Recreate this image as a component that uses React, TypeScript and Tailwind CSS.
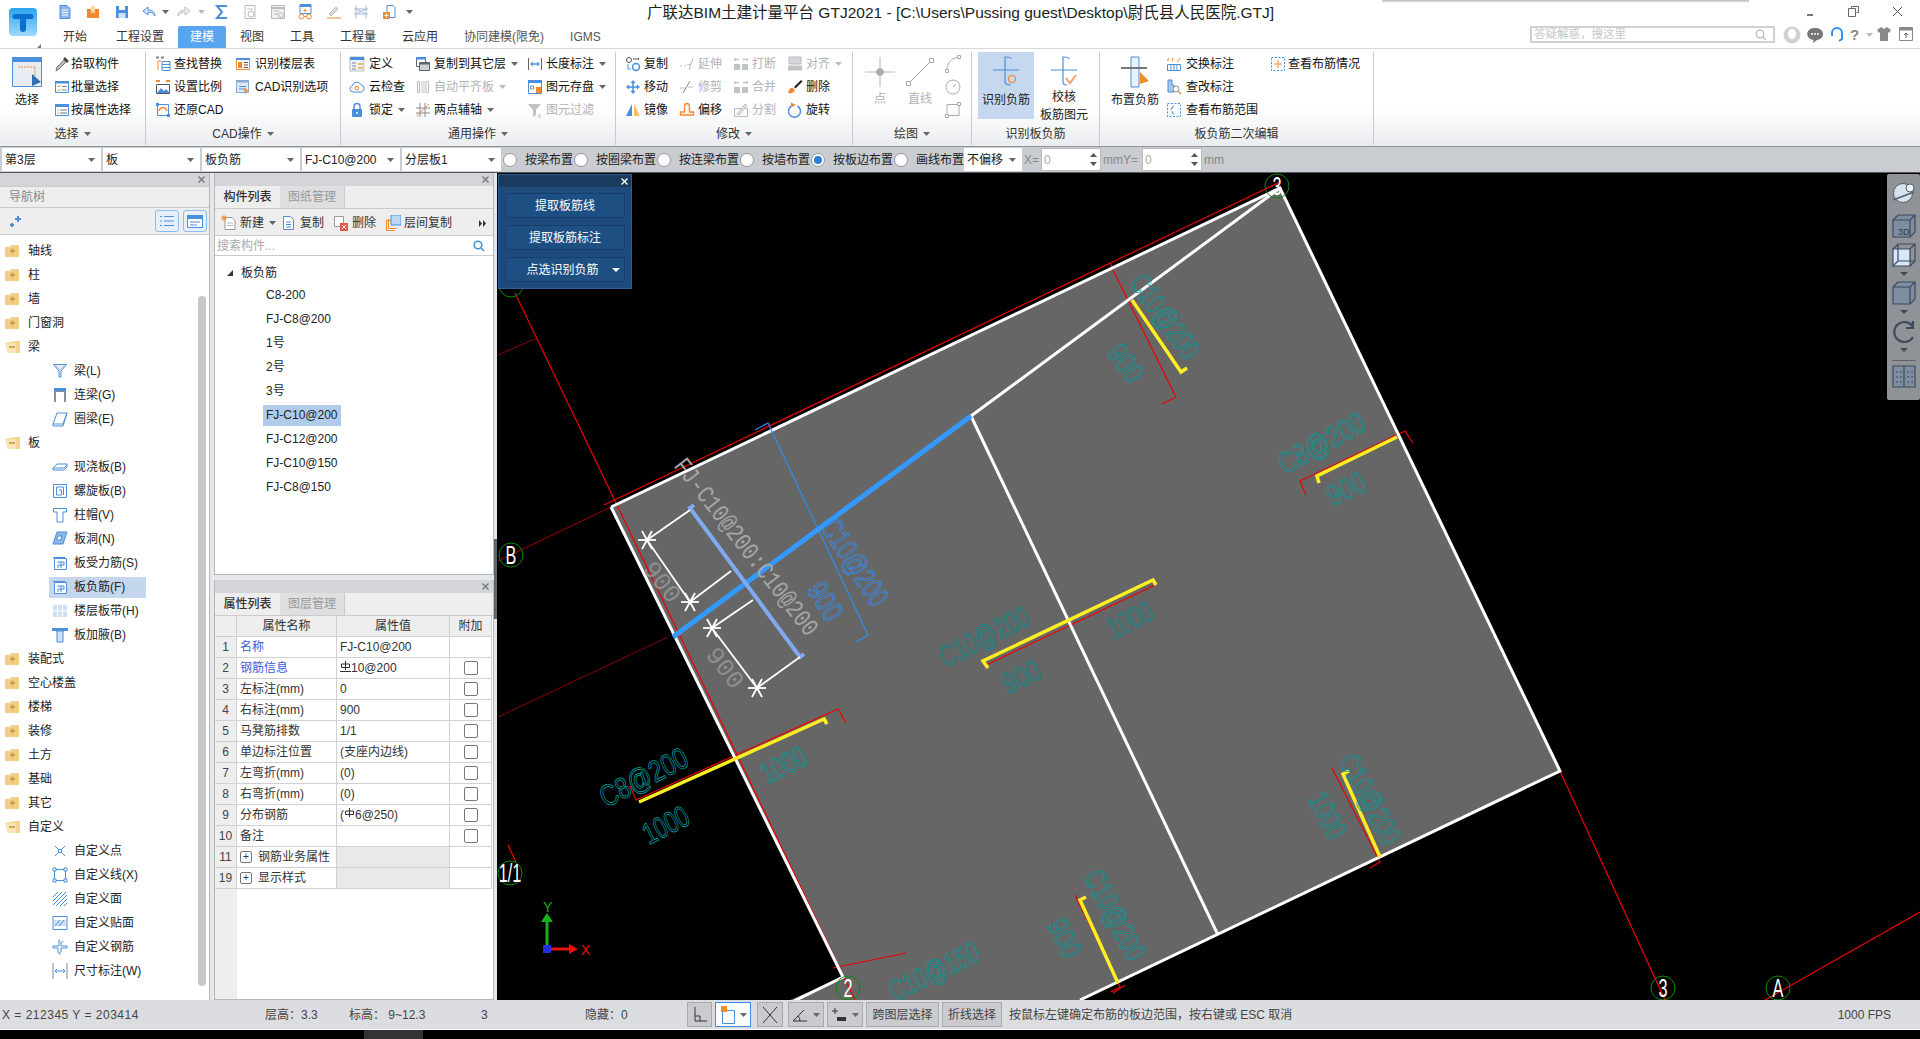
import type { ReactNode } from 'react';

const B = '#4a8fdc';
const O = '#f08a2c';
const D = '#5d6670';
const L = '#b8bcc0';

const icons: Record<string, ReactNode> = {
    doc: <><path d="M3 1.500h7l3 3v10H3z" fill="#8fb4e6" stroke={B} /><path d="M5 6h6M5 8.500h6M5 11h6" stroke="#fff" /></>,
    open: <><path d="M2 5h12v9H2z" fill={O} /><path d="M6 2h4v5H6z" fill="#ffd9a0" /><path d="M6 8h4" stroke="#fff" /></>,
    save: <><path d="M2 2h12v12H2z" fill={B} /><path d="M5 2h6v4H5z" fill="#fff" /><path d="M4.500 9h7v5h-7z" fill="#cfe0f5" /></>,
    undo: <path d="M14 12c0-4-3-6-7-6V3L2 7l5 4V8c3 0 5 1 7 4z" fill="#d7e6f8" stroke={B} />,
    redo: <path d="M2 12c0-4 3-6 7-6V3l5 4-5 4V8c-3 0-5 1-7 4z" fill="#eee" stroke={L} />,
    sigma: <path d="M13 2H3l5 6-5 6h10" stroke={B} strokeWidth="2" />,
    g1: <><path d="M3 1.500h10v13H3z" stroke={L} /><circle cx="9" cy="10" r="3" stroke={L} /><path d="M5 5h6" stroke={L} /></>,
    g2: <><path d="M1.500 1.500h13v13h-13z" stroke={L} fill="#f0f0f0" /><path d="M1.500 4h13" stroke={L} strokeWidth="2" /><path d="M4 7h5M4 10h4" stroke={L} /><circle cx="11" cy="11" r="2.500" stroke={L} /></>,
    glasses: <><path d="M3 .5h11v9H3z" fill="#fff" stroke={B} /><path d="M3 1h11v2H3z" fill={B} /><path d="M8 5v3M6.500 6.500h3" stroke={O} /><circle cx="4.500" cy="12.500" r="2.500" stroke={O} /><circle cx="12" cy="12.500" r="2.500" stroke={O} /><path d="M7 12.500h2.500" stroke={O} /></>,
    pen: <><path d="M3 10l7-7 2 2-7 7z" fill="#ddd" stroke={L} /><path d="M1 14h14" stroke={O} /></>,
    tower: <><path d="M3 1.500v13M13 1.500v13M1 5h14M1 10h14" stroke="#a5bbd6" /><path d="M3 5l10 5M13 5L3 10" stroke="#a5bbd6" /></>,
    docadd: <><path d="M6 1.500h6l2 2v10H6z" fill="#fff" stroke={B} /><path d="M2 8h7v7H2z" fill={O} /><path d="M5.500 9.500v4M3.500 11.500h4" stroke="#fff" /></>,
    pick: <><path d="M2 15l1-4 7-7 2 2-7 7z" fill="#b9bec4" stroke="#777" /><path d="M10 2l4 4" stroke="#444" strokeWidth="2.500" /></>,
    batch: <><path d="M1.500 2.500h13v11h-13z" fill="#fff" stroke={B} /><path d="M1 2h14v2.500H1z" fill={B} /><path d="M3.500 7l1 1 2-2M3.500 11l1 1 2-2" stroke={O} /><path d="M8 7.500h5M8 11h5" stroke="#888" /></>,
    attrs: <><path d="M1.500 2.500h13v11h-13z" fill="#fff" stroke={B} /><path d="M1 2h14v3H1z" fill={B} /><path d="M3.500 8h1M3.500 11h1M6 8h7M6 11h7" stroke="#777" /></>,
    replace: <><path d="M1 1.500h3M6 1.500h3" stroke="#888" strokeWidth="2" /><path d="M7 5.500h8v9H7z" fill="#fff" stroke={B} /><path d="M7 8.500h8M7 11.500h8" stroke={B} /><path d="M3 14V5h3" stroke={O} /></>,
    scale: <><path d="M1.500 5.500h13v9h-13z" fill="#fff" stroke="#555" /><path d="M2 14l4-5 3 3 2-2 4 4z" fill={B} /><path d="M1 2h4M11 2h4" stroke={O} strokeWidth="2" /></>,
    restore: <><path d="M2.500 2.500h11v11h-11z" stroke={B} /><path d="M4 9a4 4 0 0 1 7-2l1 2" stroke={O} strokeWidth="1.500" /><path d="M1 1h3v3H1zM12 12h3v3h-3z" fill={B} /></>,
    floors: <><path d="M1.500 2.500h13v11h-13z" fill="#fff" stroke={O} /><path d="M1 2h14v2H1z" fill={B} /><path d="M3 6h4v6H3z" fill={O} /><path d="M9 6.500h4M9 9h4M9 11.500h4" stroke="#555" /></>,
    cad: <><path d="M1.500 1.500h12v12h-12z" fill="#dfe9f5" stroke="#8aa9cf" /><path d="M1 1h13v2.500H1z" fill="#8aa9cf" /><path d="M4 7.500h7M4 10h7" stroke={B} /><path d="M9 9l5 3-3 1-1 3z" fill={O} /></>,
    define: <><path d="M1 1h14v14H1z" fill="#eef1f4" stroke="#bbb" /><path d="M1 1h14v3H1z" fill={B} /><path d="M3 7h4M3 10h4M3 13h4" stroke="#888" /><path d="M9 7h5v2H9zM9 11h5v2H9z" fill="#f5b46a" /></>,
    cloud: <><path d="M4 13a3.200 3.200 0 0 1-.6-6.300A4.600 4.600 0 0 1 12 5.800a3.700 3.700 0 0 1 .5 7.200z" fill="#fff" stroke={B} /><circle cx="8" cy="9" r="1.800" stroke={O} /></>,
    lock: <><path d="M5 7V4.500a3 3 0 0 1 6 0V7" stroke={B} strokeWidth="1.500" /><rect x="3" y="7" width="10" height="8" rx="1" fill={B} /><circle cx="8" cy="11" r="1" fill="#fff" /></>,
    copyfloor: <><path d="M1.500 1.500h9v9h-9z" fill="#fff" stroke={D} /><path d="M1 1h10v2.500H1z" fill={B} /><path d="M4.500 6.500h10v8h-10z" fill="#cdd2d6" stroke={D} /><path d="M4.500 6h10v2.500h-10z" fill={D} /></>,
    autoalign: <><path d="M2.500 2.500h2v11h-2zM11 2.500h2.500v11H11z" stroke={L} /><path d="M6 2h4v12H6z" fill="#dfe1e3" /></>,
    twoaxis: <><path d="M5 1v14M10 1v14M1 6h14M1 11h14" stroke="#8a8a8a" /><path d="M2 14L14 2" stroke={O} strokeDasharray="2 1" /></>,
    length: <><path d="M1.500 2v12M14.500 2v12" stroke="#666" /><path d="M4 8h8" stroke={B} strokeWidth="1.500" /><path d="M6 6L3.500 8 6 10M10 6l2.500 2L10 10" stroke={B} /></>,
    store: <><path d="M1.500 1.500h13v13h-13z" fill="#fff" stroke={B} /><path d="M1 1h14v3H1z" fill={B} /><path d="M3.500 7h3v3h-3z" stroke="#888" /><path d="M9 8h5v6H9z" fill={O} /></>,
    filter: <><path d="M1 2h13L9 8v5l-3 2V8z" fill="#bfc3c6" /><path d="M11 13h3M11 15h3" stroke="#bfc3c6" /></>,
    chain: <><circle cx="4" cy="4" r="2.500" stroke="#555" /><circle cx="11" cy="11" r="3.500" stroke={B} strokeWidth="1.500" /><path d="M8 3h6M13 2l1 1-1 1" stroke="#555" /><path d="M3 8v5h3" stroke={B} /></>,
    move: <><path d="M8 1l2.500 3h-5zM8 15l-2.500-3h5zM1 8l3-2.500v5zM15 8l-3 2.500v-5z" fill={B} /><path d="M8 4v8M4 8h8" stroke={B} strokeWidth="1.500" /></>,
    mirror: <><path d="M7 2v12H1z" fill={B} /><path d="M9 2v12h6z" fill="#f7c255" /></>,
    extend: <><path d="M1 10h2M5 10h2" stroke={L} /><path d="M8 9l4-1M10 14l4-12" stroke={L} /></>,
    trim: <><path d="M1 9h5M9 8h5" stroke={L} /><path d="M4 14L11 2" stroke="#888" /></>,
    offset: <path d="M1.500 13v-3h4V4a2.500 2.500 0 0 1 5 0v6h4v3z" fill="#fff6e5" stroke={O} strokeWidth="1.300" />,
    breakg: <><path d="M1 8h6v6H1zM9 8h6v6H9z" fill="#bfc3c6" /><path d="M2 2v3M5 2v3M11 2v3M14 2v3M1 3.500h3M12 3.500h3" stroke={L} /></>,
    split: <><path d="M1.500 6.500h13v8h-13z" stroke={L} /><path d="M4 12L12 2l2 1.500L6 13z" fill="#e5e5e5" stroke={L} /></>,
    alignr: <><path d="M2 1h12v7H2z" fill="#d5d7d9" stroke={L} /><path d="M1 9.500h14v5H1z" fill="#bfc3c6" /></>,
    erase: <><path d="M1 14c1-4 3-6 5-5l2 2c-1 2-3 4-7 3z" fill={O} /><path d="M7 8l7-7 1.500 1.500-7 7z" fill="#222" /></>,
    rotate: <><path d="M4.500 4a6 6 0 1 0 6 0" stroke={B} strokeWidth="1.500" /><path d="M4 .5L9 3 4 5.500z" fill={O} /></>,
    exchange: <><path d="M1.500 8.500h13v6h-13zM5 8.500v6M8 8.500v6M11 8.500v6" stroke={B} /><path d="M1.500 5l1-3M6 5l1-3M11 6l3-4" stroke={O} /></>,
    change: <><path d="M2 1h4v5h2v7H2z" fill="#a7c5ea" stroke={B} /><circle cx="10" cy="10" r="3" fill="#fff" stroke="#8a9099" /><path d="M12.500 12.500l2.500 2.500" stroke={O} strokeWidth="1.500" /></>,
    range: <><path d="M1.500 1.500h13v13h-13z" stroke={B} strokeDasharray="2 1.500" /><path d="M8 4a2 2 0 0 0-2 2v1H4.500M8 12a2 2 0 0 1-2-2V9" stroke={B} /></>,
    viewrange: <><path d="M1.500 1.500h13v13h-13z" stroke={B} strokeDasharray="2 1.500" /><path d="M8 4v8M4 8h8" stroke={O} /></>,
    newitem: <><path d="M4 2.500h7l3 3v9H4z" fill="#fff" stroke="#999" /><path d="M6 8h6M6 10.500h6" stroke="#bbb" /><path d="M3 0v6M0 3h6M1 1l4 4M5 1L1 5" stroke={O} /></>,
    cp: <><path d="M2.500 1.500h7l3 3v10h-10z" fill="#fff" stroke={B} /><path d="M5 7h5M5 9.500h5M5 12h5" stroke={B} /></>,
    del: <><path d="M1.500 1.500h9v10h-9z" fill="#fff" stroke="#999" /><path d="M7 8h8v8H7z" fill="#e4574c" /><path d="M9 10l4 4M13 10l-4 4" stroke="#fff" /></>,
    lay: <><path d="M1.500 5.500h8M1.500 5.500v10h8M3.500 3.500v10h8" stroke={O} /><path d="M6 0h10v10H6z" fill="#bcd8f6" stroke={B} /></>,
};

function Ico({ n, s = 16 }: { n: string; s?: number }) {
    return (
        <svg width={s} height={s} viewBox="0 0 16 16" fill="none" className="shrink-0">
            {icons[n]}
        </svg>
    );
}

function Caret({ c = '#666' }: { c?: string }) {
    return (
        <svg width="7" height="4" viewBox="0 0 7 4" className="ml-[5px] shrink-0">
            <path d="M0 0h7L3.500 4z" fill={c} />
        </svg>
    );
}

type Tool = { i: string; t: string; off?: boolean; caret?: boolean };

function ToolCol({ w, items, gap }: { w: string; items: Tool[]; gap: string }) {
    return (
        <div className={`${w} flex flex-col`}>
            {items.map((it) => (
                <div key={it.t} className="flex h-[23px] items-center">
                    <span className={gap}>
                        <Ico n={it.i} />
                    </span>
                    <span className={it.off ? 'whitespace-nowrap text-[#b0b3b6]' : 'whitespace-nowrap text-[#111]'}>{it.t}</span>
                    {it.caret && <Caret c={it.off ? '#bbb' : '#666'} />}
                </div>
            ))}
        </div>
    );
}

function Group({ w, label, caret = true, children }: { w: string; label: string; caret?: boolean; children: ReactNode }) {
    return (
        <div className={`${w} flex h-[93px] shrink-0 flex-col border-r border-[#c9cccf]`}>
            <div className="flex h-[71px] items-start">{children}</div>
            <div className="flex h-[22px] items-center justify-center text-[#333]">
                {label}
                {caret && <Caret />}
            </div>
        </div>
    );
}

function Big({ label, sub, w, active, children }: { label: string; sub?: string; w: string; active?: boolean; children: ReactNode }) {
    return (
        <div className={`${w} ${active ? 'bg-[#c5d8ef]' : ''} flex h-[67px] shrink-0 flex-col items-center pt-[4px]`}>
            <div className="h-[33px]">{children}</div>
            <div className="mt-[2px] whitespace-nowrap leading-[18px] text-[#222]">{label}</div>
            {sub && <div className="whitespace-nowrap leading-[18px] text-[#222]">{sub}</div>}
        </div>
    );
}

function Header() {
    const slots: [string, string][] = [
        ['doc', 'w-[28px]'], ['open', 'w-[29px]'], ['save', 'w-[27px]'], ['undo', 'w-[16px]'], ['car', 'w-[20px]'], ['redo', 'w-[17px]'], ['car2', 'w-[21px]'],
        ['sigma', 'w-[28px]'], ['g1', 'w-[28px]'], ['g2', 'w-[27px]'], ['glasses', 'w-[29px]'], ['pen', 'w-[28px]'], ['tower', 'w-[28px]'], ['docadd', 'w-[20px]'], ['car', 'w-[16px]'],
    ];
    return (
        <div className="relative flex h-[49px] shrink-0 border-b border-[#d6d8da] bg-white">
            <span className="absolute left-[1382px] top-0 h-[3px] w-[367px] bg-gradient-to-b from-[#b5b7b9] to-white" />
            <div className="relative h-[48px] w-[51px] shrink-0 pl-[9px] pt-[8px]">
                <svg width="28" height="28" viewBox="0 0 28 28">
                    <defs>
                        <linearGradient id="logo" x1="0" y1="0" x2="0" y2="1">
                            <stop offset="0" stopColor="#2aa3ee" />
                            <stop offset="1" stopColor="#9ed9fb" />
                        </linearGradient>
                    </defs>
                    <rect width="28" height="28" rx="4" fill="url(#logo)" />
                    <path d="M6 6h16a1.500 1.500 0 0 1 0 5h-5v10a3 3 0 0 1-6 0V11H6a2.500 2.500 0 0 1 0-5z" fill="#0b6fd0" />
                </svg>
                <span className="absolute left-[37px] top-[44px] h-0 w-0 border-b-[4px] border-l-[4px] border-b-[#777] border-l-transparent" />
            </div>
            <div className="flex min-w-0 flex-1 flex-col">
                <div className="flex h-[26px] items-start">
                    <div className="flex h-[24px] w-[366px] shrink-0 items-center pl-[6px]">
                        {slots.map(([n, w], i) => (
                            <span key={i} className={`${w} flex justify-start`}>
                                {n === 'car' ? <Caret /> : n === 'car2' ? <Caret c="#bbb" /> : <Ico n={n} />}
                            </span>
                        ))}
                    </div>
                    <div className="ml-[230px] mt-[3px] whitespace-nowrap text-[15.500px] leading-[20px] text-[#222]">
                        广联达BIM土建计量平台 GTJ2021 - [C:\Users\Pussing guest\Desktop\尉氏县人民医院.GTJ]
                    </div>
                    <div className="ml-auto flex h-[24px] items-center pr-[17px]">
                        <span className="mt-[6px] h-[2px] w-[6px] bg-[#777]" />
                        <svg width="11" height="11" viewBox="0 0 11 11" fill="none" stroke="#666" className="ml-[35px] mb-[1px]">
                            <path d="M3.500 2.500v-2h7v6h-2M.5 2.500h7v8h-7z" />
                        </svg>
                        <svg width="11" height="11" viewBox="0 0 11 11" stroke="#555" className="ml-[33px] mb-[1px]">
                            <path d="M1 1l9 9M10 1l-9 9" />
                        </svg>
                    </div>
                </div>
                <div className="flex h-[22px] items-stretch">
                    <Tab t="开始" c="ml-0" />
                    <Tab t="工程设置" c="ml-[5px]" />
                    <Tab t="建模" c="ml-[2px]" active />
                    <Tab t="视图" c="ml-[2px]" />
                    <Tab t="工具" c="ml-[2px]" />
                    <Tab t="工程量" c="ml-[2px]" />
                    <Tab t="云应用" c="ml-[2px]" />
                    <Tab t="协同建模(限免)" c="ml-[2px] text-[#555]" />
                    <Tab t="IGMS" c="ml-[2px] text-[#555]" />
                    <div className="ml-auto flex items-start pr-[7px]">
                        <div className="flex h-[17px] w-[245px] items-center justify-between border-2 border-[#cfd1d3] bg-white pl-[2px] pr-[6px] text-[11.500px] leading-none text-[#c8c8c8]">
                            答疑解惑，搜这里
                            <svg width="12" height="12" viewBox="0 0 12 12" fill="none" stroke="#bbb" strokeWidth="1.300">
                                <circle cx="5" cy="5" r="3.800" />
                                <path d="M8 8l3 3" />
                            </svg>
                        </div>
                        <svg width="18" height="18" viewBox="0 0 18 18" className="ml-[8px]">
                            <circle cx="9" cy="9" r="8.500" fill="#cfd1d3" />
                            <ellipse cx="9" cy="8" rx="4" ry="5" fill="#fff" />
                        </svg>
                        <svg width="16" height="16" viewBox="0 0 16 16" className="ml-[6px] mt-[1px]">
                            <path d="M8 1a7 6 0 0 1 2 12l-4 3 .5-3A7 6 0 0 1 8 1z" fill="#777" />
                            <circle cx="5" cy="7" r="1" fill="#fff" />
                            <circle cx="8" cy="7" r="1" fill="#fff" />
                            <circle cx="11" cy="7" r="1" fill="#fff" />
                        </svg>
                        <svg width="14" height="17" viewBox="0 0 14 17" fill="none" stroke="#2e8fef" strokeWidth="2" className="ml-[7px]">
                            <path d="M2 10V7a5 5 0 0 1 10 0v3M12 10v3l-3 2" />
                        </svg>
                        <span className="ml-[6px] w-[11px] text-[15px] font-bold leading-[17px] text-[#888]">?</span>
                        <span className="mt-[7px]"><Caret c="#bbb" /></span>
                        <svg width="14" height="14" viewBox="0 0 14 14" className="ml-[4px] mt-[1px]">
                            <path d="M4 0L0 3l2 3 1-1v9h8V5l1 1 2-3-4-3-3 2z" fill="#888" />
                        </svg>
                        <svg width="14" height="14" viewBox="0 0 14 14" fill="none" className="ml-[8px] mt-[1px]">
                            <path d="M.5.5h13v13H.5z" stroke="#888" />
                            <path d="M.5.5h13v3H.5z" fill="#888" />
                            <path d="M7 11V6M5 8l2-2 2 2" stroke="#666" />
                        </svg>
                    </div>
                </div>
            </div>
        </div>
    );
}

function Tab({ t, c, active }: { t: string; c: string; active?: boolean }) {
    return (
        <div className={`${c} flex items-center px-[12px] ${active ? 'rounded-t-[2px] bg-[#5aa5f0] text-white' : 'text-[#333]'}`}>{t}</div>
    );
}

function Ribbon() {
    return (
        <div className="flex h-[97px] shrink-0 items-start bg-gradient-to-b from-white from-60% to-[#eaedef] pt-[3px]">
            <Group w="w-[146px]" label="选择">
                <Big w="w-[54px]" label="选择">
                    <svg width="30" height="30" viewBox="0 0 30 30" fill="none" className="mt-[1px]">
                        <path d="M.5.5h29v29H.5z" fill="#e8edf4" stroke={B} />
                        <path d="M0 0h30v5H0z" fill={B} />
                        <path d="M6 10h17v16" stroke={O} strokeDasharray="2 1" />
                        <path d="M20 17l9 8-9 4z" fill="#2f6fb8" />
                    </svg>
                </Big>
                <ToolCol w="w-[92px]" gap="w-[17px]" items={[{ i: 'pick', t: '拾取构件' }, { i: 'batch', t: '批量选择' }, { i: 'attrs', t: '按属性选择' }]} />
            </Group>
            <Group w="w-[195px]" label="CAD操作">
                <div className="w-[9px]" />
                <ToolCol w="w-[80px]" gap="w-[19px]" items={[{ i: 'replace', t: '查找替换' }, { i: 'scale', t: '设置比例' }, { i: 'restore', t: '还原CAD' }]} />
                <ToolCol w="w-[100px]" gap="w-[20px]" items={[{ i: 'floors', t: '识别楼层表' }, { i: 'cad', t: 'CAD识别选项' }]} />
            </Group>
            <Group w="w-[275px]" label="通用操作">
                <div className="w-[8px]" />
                <ToolCol w="w-[66px]" gap="w-[20px]" items={[{ i: 'define', t: '定义' }, { i: 'cloud', t: '云检查' }, { i: 'lock', t: '锁定', caret: true }]} />
                <ToolCol w="w-[112px]" gap="w-[19px]" items={[{ i: 'copyfloor', t: '复制到其它层', caret: true }, { i: 'autoalign', t: '自动平齐板', off: true, caret: true }, { i: 'twoaxis', t: '两点辅轴', caret: true }]} />
                <ToolCol w="w-[88px]" gap="w-[19px]" items={[{ i: 'length', t: '长度标注', caret: true }, { i: 'store', t: '图元存盘', caret: true }, { i: 'filter', t: '图元过滤', off: true }]} />
            </Group>
            <Group w="w-[237px]" label="修改">
                <div className="w-[9px]" />
                <ToolCol w="w-[54px]" gap="w-[19px]" items={[{ i: 'chain', t: '复制' }, { i: 'move', t: '移动' }, { i: 'mirror', t: '镜像' }]} />
                <ToolCol w="w-[54px]" gap="w-[19px]" items={[{ i: 'extend', t: '延伸', off: true }, { i: 'trim', t: '修剪', off: true }, { i: 'offset', t: '偏移' }]} />
                <ToolCol w="w-[54px]" gap="w-[19px]" items={[{ i: 'breakg', t: '打断', off: true }, { i: 'breakg', t: '合并', off: true }, { i: 'split', t: '分割', off: true }]} />
                <ToolCol w="w-[60px]" gap="w-[19px]" items={[{ i: 'alignr', t: '对齐', off: true, caret: true }, { i: 'erase', t: '删除' }, { i: 'rotate', t: '旋转' }]} />
            </Group>
            <Group w="w-[119px]" label="绘图">
                <div className="w-[5px]" />
                <div className="flex w-[44px] flex-col items-center pt-[5px]">
                    <svg width="30" height="30" viewBox="0 0 30 30" fill="none" stroke="#b5b8bb">
                        <path d="M15 0v30M0 15h30" />
                        <circle cx="15" cy="15" r="3.500" fill="#aaa" />
                    </svg>
                    <span className="mt-[3px] leading-[18px] text-[#b0b3b6]">点</span>
                </div>
                <div className="flex w-[36px] flex-col items-center pt-[5px]">
                    <svg width="30" height="30" viewBox="0 0 30 30" fill="none" stroke="#a5a8ab">
                        <path d="M4 26L26 4" />
                        <path d="M1.500 24.500h4v4h-4zM24.500 1.500h4v4h-4z" fill="#fff" />
                    </svg>
                    <span className="mt-[3px] leading-[18px] text-[#b0b3b6]">直线</span>
                </div>
                <div className="ml-[7px] flex flex-col">
                    <span className="flex h-[23px] items-center">
                        <svg width="16" height="18" viewBox="0 0 16 18" fill="none" stroke="#aaa">
                            <path d="M2 15C2 8 6 3 14 2" />
                            <path d="M.5 14.500h3v3h-3zM12.500.5h3v3h-3z" fill="#fff" />
                        </svg>
                    </span>
                    <span className="flex h-[23px] items-center">
                        <svg width="16" height="16" viewBox="0 0 16 16" fill="none" stroke="#aaa">
                            <circle cx="8" cy="8" r="7" />
                            <path d="M8 8l3-3" />
                        </svg>
                    </span>
                    <span className="flex h-[23px] items-center">
                        <svg width="16" height="16" viewBox="0 0 16 16" fill="none" stroke="#aaa">
                            <path d="M2 2.500h12v11H2z" />
                            <path d="M.5 12.500h3v3h-3zM12.500.5h3v3h-3z" fill="#fff" />
                        </svg>
                    </span>
                </div>
            </Group>
            <Group w="w-[128px]" label="识别板负筋" caret={false}>
                <div className="w-[6px]" />
                <Big w="w-[56px]" label="识别负筋" active>
                    <svg width="26" height="30" viewBox="0 0 26 30" fill="none" stroke={B} strokeWidth="1.200">
                        <path d="M13 1h-1v25c0 2 2 3 6 3M0 14h26" />
                        <path d="M13 1c3 0 5 0 5 2" />
                        <circle cx="19" cy="23" r="3.500" stroke={O} />
                    </svg>
                </Big>
                <div className="w-[5px]" />
                <Big w="w-[50px]" label="校核" sub="板筋图元">
                    <svg width="26" height="30" viewBox="0 0 26 30" fill="none" stroke={B} strokeWidth="1.200">
                        <path d="M13 1h-1v25c0 2 2 3 4 3M0 14h26" />
                        <path d="M13 1c3 0 5 0 5 2" />
                        <path d="M15 22l4 5 6-8" stroke="#f4a070" strokeWidth="2" />
                    </svg>
                </Big>
            </Group>
            <Group w="w-[274px]" label="板负筋二次编辑" caret={false}>
                <div className="w-[7px]" />
                <Big w="w-[56px]" label="布置负筋">
                    <svg width="28" height="32" viewBox="0 0 28 32" fill="none">
                        <path d="M10 1h8v30h-8z" fill="#eaf1fa" stroke={B} />
                        <path d="M0 12h26" stroke="#777" strokeWidth="2" />
                        <path d="M19 16l9 9-9 3z" fill={O} />
                    </svg>
                </Big>
                <div className="w-[3px]" />
                <ToolCol w="w-[104px]" gap="w-[20px]" items={[{ i: 'exchange', t: '交换标注' }, { i: 'change', t: '查改标注' }, { i: 'range', t: '查看布筋范围' }]} />
                <ToolCol w="w-[100px]" gap="w-[18px]" items={[{ i: 'viewrange', t: '查看布筋情况' }]} />
            </Group>
        </div>
    );
}

function Select({ t, w }: { t: string; w: string }) {
    return (
        <div className={`${w} flex h-[23px] shrink-0 items-center justify-between bg-white pl-[3px] pr-[6px] text-[#222]`}>
            {t}
            <Caret />
        </div>
    );
}

function Radio({ t, w, on }: { t: string; w: string; on?: boolean }) {
    return (
        <div className={`${w} flex shrink-0 items-center`}>
            <span className="flex h-[14px] w-[14px] shrink-0 items-center justify-center rounded-full border border-[#999] bg-white">
                {on && <span className="h-[8px] w-[8px] rounded-full bg-[#2b7fe0]" />}
            </span>
            <span className="ml-[8px] whitespace-nowrap text-[#222]">{t}</span>
        </div>
    );
}

function Spin() {
    return (
        <div className="flex h-[23px] w-[60px] shrink-0 items-center justify-between border border-[#bbb] bg-white pl-[2px] pr-[3px] text-[#aaa]">
            0
            <svg width="7" height="17" viewBox="0 0 7 17" fill="#555">
                <path d="M3.500 2L7 6H0zM3.500 15L0 11h7z" />
            </svg>
        </div>
    );
}

function OptionBar() {
    return (
        <div className="flex h-[27px] shrink-0 items-center gap-[2px] border-b border-t border-b-[#55585c] border-t-[#8f9296] bg-[#c9ccd0] pl-[2px]">
            <Select t="第3层" w="w-[99px]" />
            <Select t="板" w="w-[97px]" />
            <Select t="板负筋" w="w-[98px]" />
            <Select t="FJ-C10@200" w="w-[98px]" />
            <Select t="分层板1" w="w-[99px]" />
            <Radio t="按梁布置" w="w-[69px]" />
            <Radio t="按圈梁布置" w="w-[81px]" />
            <Radio t="按连梁布置" w="w-[81px]" />
            <Radio t="按墙布置" w="w-[69px]" />
            <Radio t="按板边布置" w="w-[81px]" on />
            <Radio t="画线布置" w="w-[68px]" />
            <Select t="不偏移" w="w-[58px]" />
            <span className="w-[15px] text-[#888]">X=</span>
            <Spin />
            <span className="w-[37px] whitespace-nowrap text-[#888]">mmY=</span>
            <Spin />
            <span className="text-[#888]">mm</span>
        </div>
    );
}

const closed = (
    <svg width="15" height="12" viewBox="0 0 15 12">
        <path d="M0 2h5l1-2h8v12H0z" fill="#f0cf85" />
        <path d="M7.500 3.500v5M5 6h5" stroke="#c9973c" strokeWidth="1.500" />
    </svg>
);
const opened = (
    <svg width="16" height="12" viewBox="0 0 16 12">
        <path d="M0 2l10-2h5v12H3z" fill="#f2d48f" />
        <path d="M0 2h11v10H3z" fill="#f8e4b4" />
        <path d="M4 6h6" stroke="#c9973c" strokeWidth="1.500" />
    </svg>
);

function Sub({ k }: { k: string }) {
    const s: Record<string, ReactNode> = {
        beam: <><path d="M1.500 1.500h13L9 8v6H7V8z" stroke={B} fill="#e9f1fb" /><path d="M4 3l4 4 4-4" stroke={L} /></>,
        link: <><path d="M2 1h12v14h-2V5H4v10H2z" fill="#8a9099" /><path d="M2 1h12v3H2z" fill={B} /></>,
        ring: <><path d="M5 2h10l-4 11H1z" fill="#fff" stroke={B} /><path d="M1 13v2h10l4-13" stroke={B} /></>,
        cast: <><path d="M1 9l4-4h10v3l-3 3H1z" fill="#fff" stroke={B} /><path d="M1 9h11l3-3" stroke={B} /></>,
        spiral: <><path d="M1.500 1.500h13v13h-13z" stroke={B} /><path d="M11.500 12V4h-7v8h5V7H7" stroke={B} /></>,
        cap: <path d="M1.500 1.500h13V5H11v10H5V5H1.500z" stroke={B} fill="#fff" />,
        hole: <><path d="M5 1h10l-4 12H1z" fill="#8fb4e6" stroke={B} /><path d="M6 5h4l-1.500 4h-4z" fill="#fff" stroke={B} /></>,
        bar: <><path d="M2.500 3.500h12v11h-12z" fill="#fff" stroke={B} /><path d="M1 2.500h12" stroke={B} /><path d="M5 7h7v3H6v3M9 7v6" stroke={B} /></>,
        floorband: <><path d="M1 2h14v12H1z" fill="#cfe0f5" /><path d="M5.500 2v12M10.500 2v12M1 8h14" stroke="#fff" /></>,
        haunch: <><path d="M0 1h16v3H0z" fill={B} /><path d="M0 4h4l2 3V4zM16 4h-4l-2 3V4z" fill={O} /><path d="M5 4h6v11H5z" fill="#cfe0f5" stroke={B} /></>,
        pt: <><path d="M3 3l10 10M13 3L3 13" stroke={B} /><path d="M6.500 6.500h3v3h-3z" fill="#fff" stroke={B} /></>,
        ln: <><path d="M2.500 2.500h11v11h-11z" stroke={B} /><path d="M1 1h3v3H1zM12 1h3v3h-3zM1 12h3v3H1zM12 12h3v3h-3z" fill="#fff" stroke={B} /></>,
        face: <path d="M1 6l5-5M1 10l9-9M1 14L14 1M4 15L15 4M8 15l7-7M12 15l3-3" stroke={B} />,
        stick: <><path d="M1 1.500h14v13H1z" stroke={B} /><path d="M2 5h12v6H2z" fill="#cfe0f5" /><path d="M3 11l5-6M7 11l5-6" stroke={B} /></>,
        steel: <path d="M8 1H7v6H1v2h5v3c0 2 1 3 2 3 0-1 0-2 1-2V9h6V7H9V3c1 0 2 0 2-1" stroke={B} />,
        dim: <><path d="M1 0v16M15 0v16" stroke="#888" /><path d="M3 8h10M5 6L3 8l2 2M11 6l2 2-2 2" stroke={B} /></>,
    };
    return (
        <svg width="16" height="16" viewBox="0 0 16 16" fill="none" className="shrink-0">
            {s[k]}
        </svg>
    );
}

const tree: { t: string; k?: string; open?: boolean; sel?: boolean }[] = [
    { t: '轴线' }, { t: '柱' }, { t: '墙' }, { t: '门窗洞' }, { t: '梁', open: true },
    { t: '梁(L)', k: 'beam' }, { t: '连梁(G)', k: 'link' }, { t: '圈梁(E)', k: 'ring' }, { t: '板', open: true },
    { t: '现浇板(B)', k: 'cast' }, { t: '螺旋板(B)', k: 'spiral' }, { t: '柱帽(V)', k: 'cap' }, { t: '板洞(N)', k: 'hole' },
    { t: '板受力筋(S)', k: 'bar' }, { t: '板负筋(F)', k: 'bar', sel: true }, { t: '楼层板带(H)', k: 'floorband' }, { t: '板加腋(B)', k: 'haunch' },
    { t: '装配式' }, { t: '空心楼盖' }, { t: '楼梯' }, { t: '装修' }, { t: '土方' }, { t: '基础' }, { t: '其它' }, { t: '自定义', open: true },
    { t: '自定义点', k: 'pt' }, { t: '自定义线(X)', k: 'ln' }, { t: '自定义面', k: 'face' }, { t: '自定义贴面', k: 'stick' }, { t: '自定义钢筋', k: 'steel' }, { t: '尺寸标注(W)', k: 'dim' },
];

function Strip() {
    return (
        <div className="flex h-[13px] shrink-0 items-center justify-end bg-[#d3d5d9] pr-[4px]">
            <svg width="7" height="7" viewBox="0 0 7 7" stroke="#777" strokeWidth="1.400">
                <path d="M.5.5l6 6M6.500.5l-6 6" />
            </svg>
        </div>
    );
}

function NavPanel() {
    return (
        <div className="relative flex h-full w-[210px] shrink-0 flex-col border-r border-[#b5b8bb] bg-white">
            <Strip />
            <div className="flex h-[22px] shrink-0 items-center border-b border-t border-[#c9cbcd] bg-[#eeeeee] pl-[9px] text-[#888]">导航树</div>
            <div className="flex h-[27px] shrink-0 items-center justify-between border-b border-[#c9cbcd] bg-[#eeeeee] pl-[8px] pr-[2px]">
                <svg width="13" height="11" viewBox="0 0 13 11" fill={B}>
                    <path d="M4 7v4M2 9h4M10 0v6M7 3h6" stroke={B} strokeWidth="2" />
                </svg>
                <div className="flex gap-[4px]">
                    <span className="flex h-[22px] w-[24px] items-center justify-center rounded-[3px] border border-[#8dbcee] bg-[#e7f0fa]">
                        <svg width="14" height="12" viewBox="0 0 14 12" fill="none" stroke={B}>
                            <path d="M0 1.500h2M0 6h2M0 10.500h2M4 1.500h10M4 6h10M4 10.500h10" />
                        </svg>
                    </span>
                    <span className="flex h-[22px] w-[24px] items-center justify-center rounded-[3px] border border-[#8dbcee] bg-[#e7f0fa]">
                        <svg width="16" height="13" viewBox="0 0 16 13" fill="none">
                            <path d="M.5.5h15v12H.5z" stroke={B} fill="#fff" />
                            <path d="M0 0h16v4H0z" fill={B} />
                            <path d="M3 7h10M3 10h7" stroke={B} />
                        </svg>
                    </span>
                </div>
            </div>
            <div className="flex flex-col pt-[4px] text-[#222]">
                {tree.map((r) =>
                    r.k ? (
                        <div key={r.t} className="flex h-[24px] items-center pl-[49px]">
                            <span className={`flex h-[21px] w-[97px] items-center whitespace-nowrap pl-[3px] ${r.sel ? 'bg-[#c5d7ee]' : ''}`}>
                                <Sub k={r.k} />
                                <span className="ml-[6px]">{r.t}</span>
                            </span>
                        </div>
                    ) : (
                        <div key={r.t} className="flex h-[24px] items-center pl-[5px]">
                            <span className="flex w-[23px]">{r.open ? opened : closed}</span>
                            {r.t}
                        </div>
                    ),
                )}
            </div>
            <span className="absolute left-[198px] top-[123px] h-[690px] w-[8px] rounded-full bg-[#c8c8c8]" />
        </div>
    );
}

function TabRow({ a, b }: { a: string; b: string }) {
    return (
        <div className="flex h-[23px] shrink-0 border-b border-[#c9cbcd] bg-[#eeeeee]">
            <div className="flex w-[65px] items-center justify-center font-medium text-[#333]">{a}</div>
            <div className="flex w-[65px] items-center justify-center border-r border-[#c9cbcd] bg-[#dedfe0] text-[#999]">{b}</div>
        </div>
    );
}

function ComponentPanel() {
    const items = ['C8-200', 'FJ-C8@200', '1号', '2号', '3号', 'FJ-C10@200', 'FJ-C12@200', 'FJ-C10@150', 'FJ-C8@150'];
    return (
        <div className="flex h-[402px] shrink-0 flex-col border border-t-0 border-[#b5b8bb] bg-white">
            <Strip />
            <TabRow a="构件列表" b="图纸管理" />
            <div className="flex h-[27px] shrink-0 items-center border-b border-[#c9cbcd] bg-[#eeeeee] pl-[6px] pt-[2px] text-[#333]">
                <Ico n="newitem" />
                <span className="ml-[3px]">新建</span>
                <Caret />
                <span className="ml-[5px]"><Ico n="cp" /></span>
                <span className="ml-[3px]">复制</span>
                <span className="ml-[9px]"><Ico n="del" /></span>
                <span className="ml-[3px]">删除</span>
                <span className="ml-[9px]"><Ico n="lay" /></span>
                <span className="ml-[3px]">层间复制</span>
                <svg width="7" height="7" viewBox="0 0 7 7" fill="#333" className="ml-[27px]">
                    <path d="M0 0l3 3.500L0 7zM4 0l3 3.500L4 7z" />
                </svg>
            </div>
            <div className="flex h-[20px] shrink-0 items-center justify-between border-b border-[#c9cbcd] pl-[2px] pr-[8px] text-[#aaa]">
                搜索构件...
                <svg width="12" height="12" viewBox="0 0 12 12" fill="none" stroke="#3a95d6" strokeWidth="1.600">
                    <circle cx="5" cy="5" r="3.800" />
                    <path d="M8 8l3 3" />
                </svg>
            </div>
            <div className="flex h-[27px] shrink-0 items-center pl-[12px] pt-[6px] text-[#222]">
                <span className="h-0 w-0 border-b-[6px] border-l-[6px] border-b-[#333] border-l-transparent" />
                <span className="ml-[8px]">板负筋</span>
            </div>
            {items.map((t) => (
                <div key={t} className="flex h-[24px] shrink-0 items-center pl-[51px] text-[#222]">
                    <span className={t === 'FJ-C10@200' ? '-ml-[3px] flex h-[21px] w-[78px] items-center bg-[#b1cceb] pl-[3px]' : ''}>{t}</span>
                </div>
            ))}
        </div>
    );
}

const rows: [string, string, string, ReactNode, boolean][] = [
    ['1', '名称', 'blue', 'FJ-C10@200', false],
    ['2', '钢筋信息', 'blue', 'rebar', true],
    ['3', '左标注(mm)', '', '0', true],
    ['4', '右标注(mm)', '', '900', true],
    ['5', '马凳筋排数', '', '1/1', true],
    ['6', '单边标注位置', '', '(支座内边线)', true],
    ['7', '左弯折(mm)', '', '(0)', true],
    ['8', '右弯折(mm)', '', '(0)', true],
    ['9', '分布钢筋', '', 'dist', true],
    ['10', '备注', '', '', true],
];

function AttrPanel() {
    const cell = 'flex h-[21px] items-center border-b border-r border-[#cfd1d3]';
    return (
        <div className="flex min-h-0 flex-1 flex-col border border-t-0 border-[#b5b8bb] bg-white">
            <Strip />
            <TabRow a="属性列表" b="图层管理" />
            <div className="flex min-h-0 flex-1">
                <div className="flex w-[22px] shrink-0 flex-col bg-[#eeeeee] text-[#444]">
                    <div className={`${cell} shrink-0`} />
                    {[...rows.map((r) => r[0]), '11', '19'].map((n) => (
                        <div key={n} className={`${cell} shrink-0 justify-center`}>{n}</div>
                    ))}
                </div>
                <div className="flex w-[100px] shrink-0 flex-col text-[#333]">
                    <div className={`${cell} justify-center bg-[#eeeeee]`}>属性名称</div>
                    {rows.map((r) => (
                        <div key={r[0]} className={`${cell} pl-[3px] ${r[2] ? 'text-[#3b5bd6]' : ''}`}>{r[1]}</div>
                    ))}
                    {['钢筋业务属性', '显示样式'].map((t) => (
                        <div key={t} className={`${cell} pl-[3px]`}>
                            <span className="flex h-[12px] w-[12px] items-center justify-center rounded-[2px] border border-[#777] text-[10px] leading-none">+</span>
                            <span className="ml-[6px]">{t}</span>
                        </div>
                    ))}
                </div>
                <div className="flex w-[113px] shrink-0 flex-col text-[#333]">
                    <div className={`${cell} justify-center bg-[#eeeeee]`}>属性值</div>
                    {rows.map((r) => (
                        <div key={r[0]} className={`${cell} pl-[3px]`}>
                            {r[3] === 'rebar' ? (
                                <>
                                    <Rebar under />10@200
                                </>
                            ) : r[3] === 'dist' ? (
                                <>
                                    (<Rebar />6@250)
                                </>
                            ) : (
                                r[3]
                            )}
                        </div>
                    ))}
                    <div className={`${cell} bg-[#e9e9e9]`} />
                    <div className={`${cell} bg-[#e9e9e9]`} />
                </div>
                <div className="flex w-[42px] shrink-0 flex-col text-[#333]">
                    <div className={`${cell} justify-center bg-[#eeeeee]`}>附加</div>
                    {rows.map((r) => (
                        <div key={r[0]} className={`${cell} justify-center`}>
                            {r[4] && <span className="h-[14px] w-[14px] rounded-[2px] border border-[#777] bg-white" />}
                        </div>
                    ))}
                    <div className={cell} />
                    <div className={cell} />
                </div>
            </div>
        </div>
    );
}

function Rebar({ under }: { under?: boolean }) {
    return (
        <svg width="11" height="12" viewBox="0 0 11 12" fill="none" stroke="#333" className="mb-[2px]">
            <path d="M5.500 0v9M1.500 3h8v3.500h-8z" />
            {under && <path d="M0 10.500h11" />}
        </svg>
    );
}

function Lbl({ x, y, r, t, c = '#009a9a', sx = 0.8 }: { x: number; y: number; r: number; t: string; c?: string; sx?: number }) {
    return (
        <text
            transform={`translate(${x} ${y}) rotate(${r}) scale(${sx} 1)`}
            fontFamily="Liberation Sans"
            fontSize="30"
            fill="none"
            stroke={c}
            strokeWidth="0.8"
        >
            {t}
        </text>
    );
}

function Star({ x, y }: { x: number; y: number }) {
    return (
        <g stroke="#fff" strokeWidth="1.800">
            <path d={`M${x - 9} ${y}h18`} />
            <path d={`M${x - 5} ${y - 9}l10 18`} />
            <path d={`M${x + 5} ${y - 9}l-10 18`} />
        </g>
    );
}

function Axis({ x, y, t }: { x: number; y: number; t: string }) {
    return (
        <g>
            <circle cx={x} cy={y} r="12" fill="none" stroke="#0a8a0a" />
            <text transform={`translate(${x} ${y + 9}) scale(.65 1)`} textAnchor="middle" fontFamily="Liberation Sans" fontSize="25" fill="#fff">
                {t}
            </text>
        </g>
    );
}

function Drawing() {
    return (
        <svg width="1423" height="827" viewBox="497 173 1423 827" className="block" fill="none">
            <path d="M611 507L1280 188 1560 771 1080 1000H790L843 977z" fill="#666666" />
            <g stroke="#c00000" strokeWidth="1">
                <path d="M498 355L537 338" stroke="#8a0000" />
                <path d="M498 717L668 637" stroke="#8a0000" />
                <path d="M498 561L611 507" stroke="#a00000" />
            </g>
            <g stroke="#f00000" strokeWidth="1.200">
                <path d="M515 293L855 1000" />
                <path d="M604 505L1280 182" />
                <path d="M1560 771L1665 1000" />
                <path d="M1920 912L1765 1000" />
                <path d="M508 845L516 862" />
                <path d="M833 968L906 953" />
                <path d="M1110 262l3 8 63 127-14 7" />
                <path d="M1413 443l-8-12-105 50 6 14" />
                <path d="M630 786l6 14 202-91 8 14" />
                <path d="M1332 768l48 94-10 6" />
                <path d="M1075 895l45 92-9 5" />
                <path d="M1113 993l12-8" />
                <path d="M986 665L1155 585" />
            </g>
            <circle cx="511" cy="285" r="12" stroke="#0a8a0a" />
            <path d="M611 507L1280 188 1560 771 1080 1000M611 507L843 977 790 1003M971 416L1218 935M971 416L1280 188" stroke="#fff" strokeWidth="3" />
            <g stroke="#ffee22" strokeWidth="3.500">
                <path d="M1132 300l49 72 6-4" />
                <path d="M1397 437l-80 39 2 7" />
                <path d="M988 668l-5-7 170-81 3 5" />
                <path d="M827 724l-3-5-185 83" />
                <path d="M1349 771l-6 3 37 83" />
                <path d="M1086 897l-6 3 38 83" />
            </g>
            <path d="M768 423L868 635l-12 7M755 430l13-7" stroke="#2b8fee" strokeWidth="1.200" />
            <path d="M673 637L971 416" stroke="#3399ff" strokeWidth="5" />
            <path d="M694 505l-4 3L800 657l4-3" stroke="#80aaf0" strokeWidth="4" />
            <path d="M690 510L647 540 690 602 731 571M753 600L712 628 757 688 800 657" stroke="#fff" strokeWidth="1.800" />
            <Star x={647} y={540} />
            <Star x={690} y={602} />
            <Star x={712} y={628} />
            <Star x={757} y={688} />
            <text transform="translate(673 466) rotate(52) scale(.96 1.200)" fontFamily="Liberation Mono" fontSize="21" fill="#a6a6a6">
                FJ-C10@200:C10@200
            </text>
            <text transform="translate(642 569) rotate(52)" fontFamily="Liberation Mono" fontSize="25" fill="#8f8f8f">900</text>
            <text transform="translate(705 655) rotate(52)" fontFamily="Liberation Mono" fontSize="25" fill="#8f8f8f">900</text>
            <Lbl x={820} y={527} r={57} t="C10@200" c="#2e90f0" sx={0.72} />
            <Lbl x={806} y={590} r={57} t="900" c="#2e90f0" />
            <Lbl x={1128} y={283} r={54} t="C10@200" sx={0.72} />
            <Lbl x={1106} y={353} r={54} t="900" />
            <Lbl x={1285} y={475} r={-29} t="C8@200" />
            <Lbl x={1333} y={507} r={-26} t="900" />
            <Lbl x={945} y={668} r={-27} t="C10@200" c="#008c8c" sx={0.72} />
            <Lbl x={1008} y={695} r={-27} t="900" c="#008c8c" />
            <Lbl x={1113} y={640} r={-27} t="1000" c="#008c8c" sx={0.72} />
            <Lbl x={606} y={808} r={-27} t="C8@200" c="#00a5a5" />
            <Lbl x={649} y={845} r={-27} t="1000" c="#00a5a5" sx={0.72} />
            <Lbl x={767} y={785} r={-27} t="1000" sx={0.72} />
            <Lbl x={1338} y={761} r={62} t="C10@200" sx={0.72} />
            <Lbl x={1307} y={799} r={62} t="1000" sx={0.72} />
            <Lbl x={1083} y={877} r={62} t="C10@200" sx={0.72} />
            <Lbl x={1046} y={925} r={62} t="900" />
            <Lbl x={895} y={1002} r={-26} t="C10@150" sx={0.72} />
            <Axis x={1277} y={186} t="3" />
            <Axis x={511} y={555} t="B" />
            <Axis x={510} y={873} t="1/1" />
            <Axis x={848} y={988} t="2" />
            <Axis x={1663} y={988} t="3" />
            <Axis x={1778} y={988} t="A" />
            <path d="M547 949V918" stroke="#18b018" strokeWidth="3" />
            <path d="M541 922l6-9 6 9z" fill="#18b018" />
            <path d="M547 949h24" stroke="#e81010" strokeWidth="3" />
            <path d="M569 944l9 5-9 5z" fill="#e81010" />
            <path d="M543 945h8v8h-8z" fill="#2030e0" />
            <text x="543" y="912" fontFamily="Liberation Sans" fontSize="14" fill="#18b018">Y</text>
            <text x="581" y="955" fontFamily="Liberation Sans" fontSize="14" fill="#e81010">X</text>
        </svg>
    );
}

function ViewBar() {
    const cube = (inner: ReactNode, key: string) => (
        <svg key={key} width="24" height="24" viewBox="0 0 24 24" fill="none" stroke="#3d4b5c" strokeWidth="1.200" className="shrink-0">
            {inner}
        </svg>
    );
    const arrow = <span className="my-[5px] h-0 w-0 shrink-0 border-x-[4px] border-t-[4px] border-x-transparent border-t-[#3d4b5c]" />;
    return (
        <div className="absolute right-0 top-[1px] flex h-[226px] w-[33px] flex-col items-center rounded-[2px] bg-[#8f9297] pt-[8px]">
            <svg width="24" height="22" viewBox="0 0 24 22" className="mb-[10px] shrink-0">
                <circle cx="11" cy="11" r="9.500" fill="#d8e2ec" stroke="#55606d" />
                <circle cx="18" cy="6" r="4" fill="#eef3f8" stroke="#55606d" />
                <path d="M1 18L22 10" stroke="#55606d" strokeWidth="1.500" />
            </svg>
            {cube(<><path d="M1 6h17v17H1zM1 6l5-5h17v17l-5 5M18 6l5-5" fill="#7e8da0" /><text x="6" y="21" fontFamily="Liberation Sans" fontSize="9" fill="#2d3a4a" stroke="none">3D</text></>, 'a')}
            <div className="h-[5px] shrink-0" />
            {cube(<><path d="M1 6h17v17H1z" fill="#d6e8fb" /><path d="M1 6l5-5h17v17l-5 5M18 6l5-5M6 1v17h17M6 18l-5 5" /></>, 'b')}
            {arrow}
            {cube(<path d="M1 6h17v17H1zM1 6l5-5h17v17l-5 5M18 6l5-5" fill="#7e8da0" />, 'c')}
            {arrow}
            <svg width="24" height="24" viewBox="0 0 24 24" fill="none" stroke="#3d4b5c" strokeWidth="2.200" className="shrink-0">
                <path d="M21 8A10 10 0 1 0 21 18M21 2v7h-7" />
            </svg>
            {arrow}
            <span className="my-[3px] h-px w-[24px] shrink-0 bg-[#5f6267]" />
            {cube(<><path d="M1 2h22v21H1z" fill="#7e8da0" /><path d="M12 2v21M4 8h2M4 13h2M4 18h2M15 8h2M15 13h2M15 18h2M8 8h2M8 13h2M8 18h2M19 8h2M19 13h2M19 18h2" /></>, 'd')}
        </div>
    );
}

function RecognizePanel() {
    return (
        <div className="absolute left-[1px] top-[1px] flex h-[115px] w-[134px] flex-col border border-[#2c5f96] bg-[#1e4b7c] text-white">
            <div className="flex h-[12px] shrink-0 items-center justify-end bg-[#1a3a5e] pr-[3px]">
                <svg width="7" height="7" viewBox="0 0 7 7" stroke="#fff" strokeWidth="1.400">
                    <path d="M.5.5l6 6M6.500.5l-6 6" />
                </svg>
            </div>
            <div className="flex flex-col gap-[7px] px-[6px] pt-[6px]">
                <div className="flex h-[25px] items-center justify-center rounded-[2px] border border-[#173f6c] bg-[#1e4f82]">提取板筋线</div>
                <div className="flex h-[25px] items-center justify-center rounded-[2px] border border-[#173f6c] bg-[#1e4f82]">提取板筋标注</div>
                <div className="flex h-[25px] items-center justify-center rounded-[2px] border border-[#173f6c] bg-[#1e4f82] pl-[16px]">
                    点选识别负筋
                    <span className="ml-[13px] h-0 w-0 border-x-[4px] border-t-[4px] border-x-transparent border-t-white" />
                </div>
            </div>
        </div>
    );
}

function StatusBar() {
    const btn = 'flex h-[25px] items-center justify-center border border-[#a8aaad] bg-[#c9cbcf]';
    return (
        <div className="flex h-[29px] shrink-0 items-center bg-[#dcdde0] pl-[2px] text-[#444]">
            <span className="w-[263px] tracking-[.5px]">X = 212345 Y = 203414</span>
            <span className="w-[84px]">层高：3.3</span>
            <span className="w-[132px]">标高：  9~12.3</span>
            <span className="w-[104px]">3</span>
            <span className="w-[102px]">隐藏：0</span>
            <div className={`${btn} w-[25px]`}>
                <svg width="14" height="16" viewBox="0 0 14 16" fill="none" stroke="#333">
                    <path d="M2 0v14h12M7 14V9H2" />
                </svg>
            </div>
            <div className="ml-[3px] flex h-[25px] w-[36px] items-center border border-[#3b8fe8] bg-white pl-[5px]">
                <svg width="14" height="18" viewBox="0 0 14 18" fill="none">
                    <path d="M1.500 4.500h12v13h-12z" stroke={B} />
                    <path d="M0 0h6v6H0z" fill={O} />
                </svg>
                <Caret />
            </div>
            <div className={`${btn} ml-[6px] w-[26px]`}>
                <svg width="16" height="18" viewBox="0 0 16 18" stroke="#333">
                    <path d="M1 1l14 16M15 1L1 17" />
                </svg>
            </div>
            <div className={`${btn} ml-[5px] w-[36px]`}>
                <svg width="16" height="14" viewBox="0 0 16 14" fill="none" stroke="#333">
                    <path d="M1 13h14M1 13L12 2" />
                    <path d="M8 13a7 7 0 0 0-2-5" />
                </svg>
                <Caret />
            </div>
            <div className={`${btn} ml-[3px] w-[36px]`}>
                <svg width="16" height="14" viewBox="0 0 16 14" fill="none">
                    <path d="M4 0v6M1 3h6" stroke="#333" />
                    <path d="M6 9h9v4H6z" fill="#333" />
                </svg>
                <Caret />
            </div>
            <div className={`${btn} ml-[3px] w-[73px]`}>跨图层选择</div>
            <div className={`${btn} ml-[3px] w-[60px]`}>折线选择</div>
            <span className="ml-[7px]">按鼠标左键确定布筋的板边范围，按右键或 ESC 取消</span>
            <span className="ml-auto pr-[29px]">1000 FPS</span>
        </div>
    );
}

export default function App() {
    return (
        <div className="flex h-[1039px] w-[1920px] flex-col overflow-hidden bg-[#e6e7e9] font-['Liberation_Sans','Noto_Sans_CJK_SC',sans-serif] text-[12px] leading-none">
            <Header />
            <Ribbon />
            <OptionBar />
            <div className="flex min-h-0 flex-1">
                <NavPanel />
                <div className="ml-[4px] flex h-full w-[280px] shrink-0 flex-col gap-[5px]">
                    <ComponentPanel />
                    <AttrPanel />
                </div>
                <div className="relative w-[3px] shrink-0 bg-[#e6e7e9]">
                    <span className="absolute left-[0px] top-[366px] h-[80px] w-[3px] bg-[#5c6670]" />
                </div>
                <div className="relative min-w-0 flex-1 overflow-hidden bg-black">
                    <Drawing />
                    <RecognizePanel />
                    <ViewBar />
                </div>
            </div>
            <StatusBar />
            <div className="flex h-[10px] shrink-0 border-t border-white bg-black pl-[364px]">
                <span className="h-full w-[59px] bg-[#333333]" />
            </div>
        </div>
    );
}
